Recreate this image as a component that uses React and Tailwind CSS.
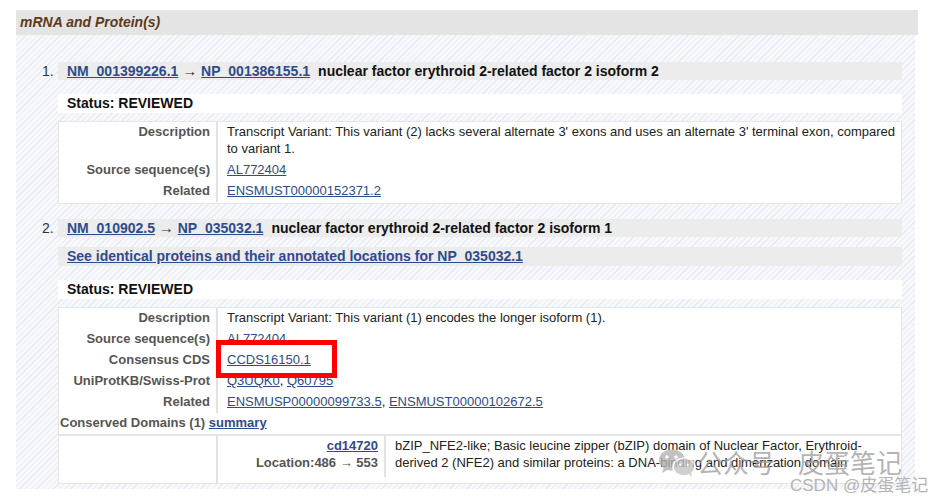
const link = "text-[#2d4b8e] underline";

function Row({ label, children }) {
  return (
    <div className="flex">
      <div className="w-[159px] shrink-0 border-r-2 border-[#e2e2e2] pr-[6px] pt-[1px] pb-[3px] text-right font-bold text-[#555]">
        {label}
      </div>
      <div className="flex-1 pl-[9px] pr-[4px] pt-[1px] pb-[3px] text-[#222]">{children}</div>
    </div>
  );
}

function Heading({ nm, np, title }) {
  return (
    <div className="h-[18px] bg-[#ececec] pl-[9px] text-[14px] leading-[18px] font-bold text-[#111]">
      <a className={link}>{nm}</a> <span className="text-[15px] font-normal text-[#333]">→</span>{" "}
      <a className={link}>{np}</a>
      <span className="ml-[8px]">{title}</span>
    </div>
  );
}

function Status() {
  return (
    <div className="h-[19px] bg-white pl-[9px] text-[14px] leading-[19px] font-bold text-[#111]">
      Status: REVIEWED
    </div>
  );
}

function Num({ n }) {
  return (
    <div className="w-[16px] shrink-0 pr-[5px] text-right text-[14px] leading-[18px] text-[#333]">{n}</div>
  );
}

function WeChat() {
  return (
    <svg width="38" height="30" viewBox="0 0 38 30">
      <ellipse cx="14" cy="12" rx="13" ry="10.5" fill="#b4b4b4" />
      <path d="M6 19 L4 25 L11 21 Z" fill="#b4b4b4" />
      <ellipse cx="26" cy="19" rx="11" ry="9" fill="#c4c4c4" stroke="#fff" strokeWidth="1.5" />
      <path d="M31 26 L34 29 L33 24 Z" fill="#c4c4c4" />
      <circle cx="9" cy="9" r="1.7" fill="#fff" />
      <circle cx="18" cy="9" r="1.7" fill="#fff" />
      <circle cx="22" cy="17" r="1.4" fill="#fff" />
      <circle cx="30" cy="17" r="1.4" fill="#fff" />
    </svg>
  );
}

export default function App() {
  return (
    <div className="relative h-[501px] w-[930px] overflow-hidden bg-white font-['Liberation_Sans',Arial,sans-serif] text-[13px] leading-[17px] text-[#222]">
      <div className="ml-[16px] mt-[10px] w-[902px]">
        <div className="h-[25px] bg-[#e4e4e4] pl-[4px] text-[14px] leading-[25px] font-bold italic text-[#5e3a1b]">
          mRNA and Protein(s)
        </div>
        <div className="w-[899px] bg-[image:repeating-linear-gradient(135deg,#f7f8fb_0px,#f7f8fb_3px,#e8ecf2_3px,#e8ecf2_4px)] pl-[26px] pr-[13px] pt-[27px] pb-[5px]">
          {/* item 1 */}
          <div className="flex">
            <Num n="1." />
            <div className="flex-1">
              <Heading
                nm="NM_001399226.1"
                np="NP_001386155.1"
                title="nuclear factor erythroid 2-related factor 2 isoform 2"
              />
              <div className="mt-[14px]">
                <Status />
              </div>
              <div className="mt-[8px] border border-[#e6e6e6] bg-white pb-[1px]">
                <Row label="Description">
                  Transcript Variant: This variant (2) lacks several alternate 3' exons and uses an alternate 3'
                  terminal exon, compared to variant 1.
                </Row>
                <Row label="Source sequence(s)">
                  <a className={link}>AL772404</a>
                </Row>
                <Row label="Related">
                  <a className={link}>ENSMUST00000152371.2</a>
                </Row>
              </div>
            </div>
          </div>

          {/* item 2 */}
          <div className="mt-[15px] flex">
            <Num n="2." />
            <div className="flex-1">
              <Heading
                nm="NM_010902.5"
                np="NP_035032.1"
                title="nuclear factor erythroid 2-related factor 2 isoform 1"
              />
              <div className="mt-[10px] h-[19px] bg-[#ececec] pl-[9px] text-[14px] leading-[19px] font-bold">
                <a className={link}>See identical proteins and their annotated locations for NP_035032.1</a>
              </div>
              <div className="mt-[14px]">
                <Status />
              </div>
              <div className="mt-[8px] border border-[#e6e6e6] bg-white">
                <Row label="Description">
                  Transcript Variant: This variant (1) encodes the longer isoform (1).
                </Row>
                <Row label="Source sequence(s)">
                  <a className={link}>AL772404</a>
                </Row>
                <Row label="Consensus CDS">
                  <a className={link}>CCDS16150.1</a>
                </Row>
                <Row label="UniProtKB/Swiss-Prot">
                  <a className={link}>Q3UQK0</a>, <a className={link}>Q60795</a>
                </Row>
                <Row label="Related">
                  <a className={link}>ENSMUSP00000099733.5</a>, <a className={link}>ENSMUST00000102672.5</a>
                </Row>
                <div className="pl-[1px] pt-[1px] pb-[3px] font-bold text-[#555]">
                  Conserved Domains (1) <a className={link}>summary</a>
                </div>
                <div className="flex border-t-2 border-[#e4e4e4]">
                  <div className="w-[159px] shrink-0 border-r-2 border-[#e2e2e2]" />
                  <div className="flex flex-1 pb-[6px]">
                    <div className="w-[168px] shrink-0 border-r-2 border-[#e2e2e2] pr-[6px] pt-[1px] pb-[6px] text-right font-bold text-[#555]">
                      <a className={link}>cd14720</a>
                      <div>Location:486 → 553</div>
                    </div>
                    <div className="flex-1 pl-[9px] pr-[8px] pt-[1px] text-[#222]">
                      bZIP_NFE2-like; Basic leucine zipper (bZIP) domain of Nuclear Factor, Erythroid-derived 2
                      (NFE2) and similar proteins: a DNA-binding and dimerization domain
                    </div>
                  </div>
                </div>
              </div>
            </div>
          </div>
        </div>
      </div>

      {/* annotation box */}
      <div className="absolute left-[216px] top-[340px] h-[38px] w-[121px] border-[5px] border-[#ff0000]" />

      {/* watermark */}
      <div className="absolute left-[658px] top-[448px] opacity-80">
        <WeChat />
      </div>
      <div className="absolute left-[697px] top-[447px] flex font-['Noto_Sans_CJK_SC',sans-serif] text-[26px] leading-[30px] text-[#a0a0a0]/80">
        <span>公众号</span>
        <span className="ml-[23px]">皮蛋笔记</span>
      </div>
      <div className="absolute left-[790px] top-[475px] font-['Liberation_Sans','Noto_Sans_CJK_SC',sans-serif] text-[17px] leading-[22px] text-[#b4b4b4]">
        CSDN @皮蛋笔记
      </div>
    </div>
  );
}
